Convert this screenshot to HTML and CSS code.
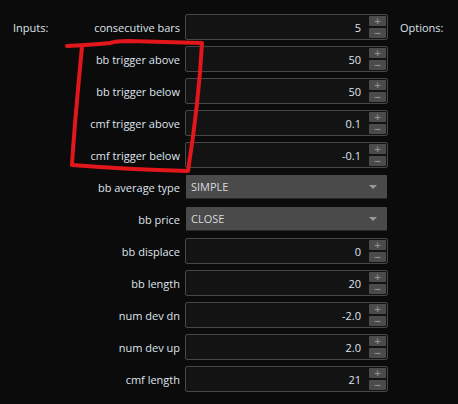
FILE: index.html
```html
<!DOCTYPE html>
<html>
<head>
<meta charset="utf-8">
<link rel="stylesheet" href="styles.css">
</head>
<body>
<div class="panel">
  <div class="grid">
    <div class="label first"><span class="section">Inputs:</span><span>consecutive bars</span></div>
    <div class="field"><span class="val">5</span><div class="spin"><div class="btn">+</div><div class="btn">−</div></div></div>
    <div class="options">Options:</div>

    <div class="label">bb trigger above</div>
    <div class="field"><span class="val">50</span><div class="spin"><div class="btn">+</div><div class="btn">−</div></div></div>
    <div></div>

    <div class="label">bb trigger below</div>
    <div class="field"><span class="val">50</span><div class="spin"><div class="btn">+</div><div class="btn">−</div></div></div>
    <div></div>

    <div class="label">cmf trigger above</div>
    <div class="field"><span class="val">0.1</span><div class="spin"><div class="btn">+</div><div class="btn">−</div></div></div>
    <div></div>

    <div class="label">cmf trigger below</div>
    <div class="field"><span class="val">-0.1</span><div class="spin"><div class="btn">+</div><div class="btn">−</div></div></div>
    <div></div>

    <div class="label">bb average type</div>
    <div class="select"><span>SIMPLE</span><span class="arrow"></span></div>
    <div></div>

    <div class="label">bb price</div>
    <div class="select"><span>CLOSE</span><span class="arrow"></span></div>
    <div></div>

    <div class="label">bb displace</div>
    <div class="field"><span class="val">0</span><div class="spin"><div class="btn">+</div><div class="btn">−</div></div></div>
    <div></div>

    <div class="label">bb length</div>
    <div class="field"><span class="val">20</span><div class="spin"><div class="btn">+</div><div class="btn">−</div></div></div>
    <div></div>

    <div class="label">num dev dn</div>
    <div class="field"><span class="val">-2.0</span><div class="spin"><div class="btn">+</div><div class="btn">−</div></div></div>
    <div></div>

    <div class="label">num dev up</div>
    <div class="field"><span class="val">2.0</span><div class="spin"><div class="btn">+</div><div class="btn">−</div></div></div>
    <div></div>

    <div class="label">cmf length</div>
    <div class="field"><span class="val">21</span><div class="spin"><div class="btn">+</div><div class="btn">−</div></div></div>
    <div></div>
  </div>
  <svg class="mark" width="458" height="404" viewBox="0 0 458 404">
    <path d="M67 46 C85 45 100 44 110 43 C116 41 120 41 128 41 L202 43 C200 80 196 120 188 171 C150 170 110 168 72 165 C74 130 78 90 82 46" fill="none" stroke="#e3161b" stroke-width="4" stroke-linecap="round" stroke-linejoin="round"/>
  </svg>
</div>
</body>
</html>
```
FILE: styles.css
```css
html, body {
  margin: 0;
  padding: 0;
  background: #0b0b0b;
}
.panel {
  position: relative;
  width: 458px;
  height: 404px;
  overflow: hidden;
  font-family: "Open Sans", "Noto Sans", sans-serif;
  font-size: 11px;
  color: #dfe4ec;
}
.grid {
  display: grid;
  grid-template-columns: 167px 203px auto;
  grid-auto-rows: 26px;
  column-gap: 5px;
  row-gap: 6px;
  padding: 14px 0 0 13px;
}
.label {
  display: flex;
  align-items: center;
  justify-content: flex-end;
  white-space: nowrap;
}
.label.first {
  justify-content: space-between;
}
.options {
  display: flex;
  align-items: center;
  padding-left: 7px;
}
.field {
  box-sizing: border-box;
  display: flex;
  align-items: center;
  justify-content: flex-end;
  background: #131313;
  border: 1px solid #474747;
  border-radius: 2px;
  padding-right: 1px;
}
.val {
  margin-right: 8px;
}
.spin {
  display: flex;
  flex-direction: column;
  gap: 2px;
}
.btn {
  width: 17px;
  height: 10px;
  background: #4b4b4b;
  border-radius: 1px;
  color: #8f8f8f;
  font-family: "DejaVu Sans", sans-serif;
  font-size: 9px;
  font-weight: bold;
  line-height: 10px;
  text-align: center;
}
.select {
  box-sizing: border-box;
  margin: 1px;
  display: flex;
  align-items: center;
  justify-content: space-between;
  background: #4a4a4a;
  border-bottom: 1px solid #2a2a2a;
  border-radius: 1px;
  padding: 0 10px 0 5px;
  color: #d6d9de;
}
.arrow {
  width: 0;
  height: 0;
  border-left: 4px solid transparent;
  border-right: 4px solid transparent;
  border-top: 4px solid #9a9a9a;
}
.mark {
  position: absolute;
  left: 0;
  top: 0;
  pointer-events: none;
}
```
